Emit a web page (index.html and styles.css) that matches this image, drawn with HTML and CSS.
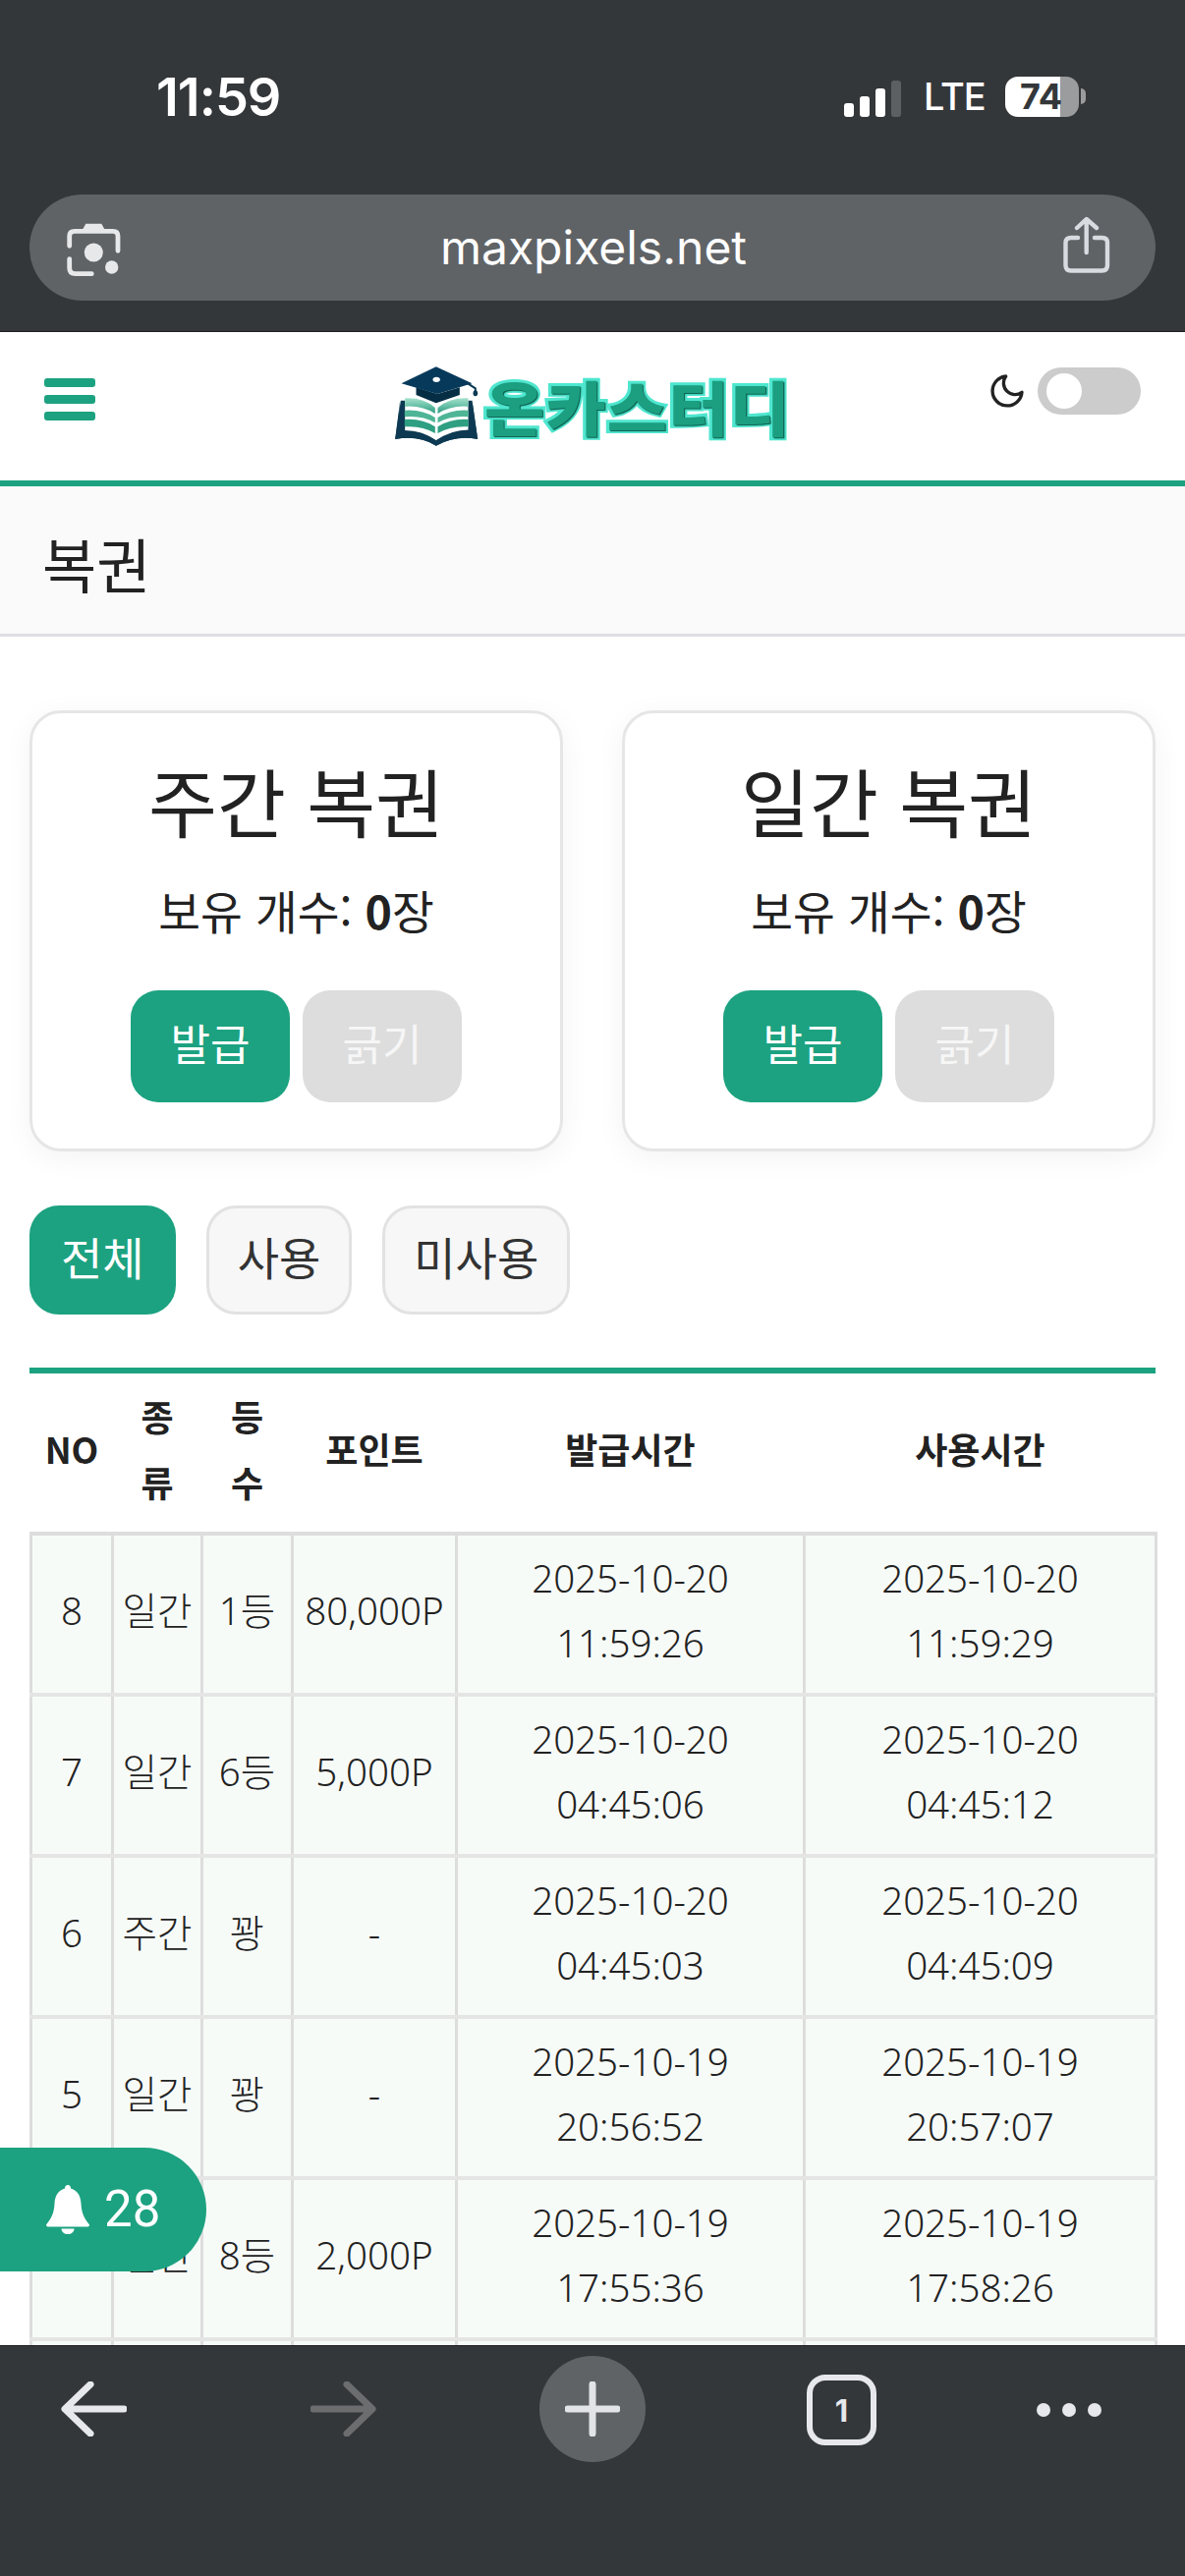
FILE: index.html
```html
<!DOCTYPE html>
<html lang="ko">
<head>
<meta charset="utf-8">
<title>복권</title>
<link rel="stylesheet" href="styles.css">
</head>
<body>
<div class="phone">
  <header class="chrome-top">
    <div class="status">
      <span class="time">11:59</span>
      <div class="status-right">
        <span class="signal"><i class="b1"></i><i class="b2"></i><i class="b3"></i><i class="b4"></i></span>
        <span class="lte">LTE</span>
        <span class="battery"><span class="battery-num">74</span></span>
        <span class="nub"></span>
      </div>
    </div>
    <div class="urlbar">
      <svg class="cam" viewBox="0 0 70 70" fill="none" stroke="#e6e8ea" stroke-width="4.8" stroke-linecap="round">
        <path d="M10.7 33.3V23.3Q10.7 18.3 16 18.3H55Q60 18.3 60 23.3V38.3"/>
        <path d="M10.7 46.7V55.7Q10.7 61.7 16.7 61.7H33.3"/>
        <path d="M23.3 18L27.3 10.7H43.3L47.3 18Z" fill="#e6e8ea" stroke="none"/>
        <circle cx="35.3" cy="40" r="9.5" fill="#e6e8ea" stroke="none"/>
        <circle cx="53.7" cy="55" r="6.7" fill="#e6e8ea" stroke="none"/>
      </svg>
      <span class="url">maxpixels.net</span>
      <svg class="share" viewBox="0 0 60 70" fill="none" stroke="#d8dbe0" stroke-width="4.4" stroke-linecap="round" stroke-linejoin="round">
        <path d="M29.7 7V40M20 15L29.7 6L40 15"/>
        <path d="M21 25H14Q8.5 25 8.5 30V53Q8.5 58.5 14 58.5H45.5Q51 58.5 51 53V30Q51 25 45.5 25H38"/>
      </svg>
    </div>
  </header>

  <div class="viewport">
    <nav class="site-header">
      <div class="burger"><i></i><i></i><i></i></div>
      <div class="logo">
        <svg class="logo-mark" viewBox="130 90 260 255">
          <defs>
            <linearGradient id="pg" x1="0" y1="0" x2="0" y2="1">
              <stop offset="0" stop-color="#a5e2cd"/>
              <stop offset="1" stop-color="#2b9d80"/>
            </linearGradient>
          </defs>
          <path d="M148 200L133 318Q205 305 258 338Q318 305 385 318L368 200L372 290Q310 285 258 322Q205 285 143 292Z" fill="#0d3a52"/>
          <path d="M150 200H163V296Q210 290 258 322Q310 290 356 296V200H368L385 318Q318 305 258 338Q205 305 133 318Z" fill="#0d3a52"/>
          <path d="M163 193Q220 190 255 222V240Q215 214 163 218Z" fill="url(#pg)"/>
          <path d="M162 230Q215 226 255 252V268Q215 245 162 250Z" fill="#4fb597"/>
          <path d="M162 258Q215 254 255 280V300Q215 276 162 280Z" fill="#2f9f82"/>
          <path d="M356 193Q300 190 263 222V240Q303 214 356 218Z" fill="url(#pg)"/>
          <path d="M357 230Q304 226 263 252V268Q304 245 357 250Z" fill="#4fb597"/>
          <path d="M357 258Q304 254 263 280V300Q304 276 357 280Z" fill="#2f9f82"/>
          <path d="M197 160V183L258 208L330 183V160L262 180Z" fill="#052e45"/>
          <path d="M258 97L368 148L262 180L152 148Z" fill="#07395a"/>
          <ellipse cx="259" cy="136" rx="11" ry="8" fill="#fff"/>
          <path d="M355 148L378 163V180" fill="none" stroke="#0b3a52" stroke-width="6"/>
          <ellipse cx="378" cy="178" rx="7" ry="9" fill="#0b3a52"/>
        </svg>
        <span class="logo-text">온카스터디</span>
      </div>
      <div class="theme">
        <svg class="moon" viewBox="0 0 24 24" fill="none" stroke="#222" stroke-width="2" stroke-linecap="round" stroke-linejoin="round"><path d="M21 12.79A9 9 0 1 1 11.21 3 7 7 0 0 0 21 12.79z"/></svg>
        <span class="toggle"><span class="knob"></span></span>
      </div>
    </nav>

    <div class="page-title">복권</div>

    <main class="content">
      <section class="cards">
        <article class="card">
          <h2 class="card-title">주간 복권</h2>
          <p class="card-count">보유 개수: <b>0</b>장</p>
          <div class="card-btns"><span class="btn btn-on">발급</span><span class="btn btn-off">긁기</span></div>
        </article>
        <article class="card">
          <h2 class="card-title">일간 복권</h2>
          <p class="card-count">보유 개수: <b>0</b>장</p>
          <div class="card-btns"><span class="btn btn-on">발급</span><span class="btn btn-off">긁기</span></div>
        </article>
      </section>

      <div class="tabs">
        <span class="tab tab-on">전체</span>
        <span class="tab">사용</span>
        <span class="tab">미사용</span>
      </div>

      <div class="table-wrap">
        <table class="tbl">
          <colgroup><col class="c1"><col class="c2"><col class="c3"><col class="c4"><col class="c5"><col class="c6"></colgroup>
          <thead>
            <tr><th>NO</th><th>종류</th><th>등수</th><th>포인트</th><th>발급시간</th><th>사용시간</th></tr>
          </thead>
          <tbody>
            <tr><td>8</td><td>일간</td><td>1등</td><td>80,000P</td><td>2025-10-20<br>11:59:26</td><td>2025-10-20<br>11:59:29</td></tr>
            <tr><td>7</td><td>일간</td><td>6등</td><td>5,000P</td><td>2025-10-20<br>04:45:06</td><td>2025-10-20<br>04:45:12</td></tr>
            <tr><td>6</td><td>주간</td><td>꽝</td><td>-</td><td>2025-10-20<br>04:45:03</td><td>2025-10-20<br>04:45:09</td></tr>
            <tr><td>5</td><td>일간</td><td>꽝</td><td>-</td><td>2025-10-19<br>20:56:52</td><td>2025-10-19<br>20:57:07</td></tr>
            <tr><td>4</td><td>일간</td><td>8등</td><td>2,000P</td><td>2025-10-19<br>17:55:36</td><td>2025-10-19<br>17:58:26</td></tr>
            <tr class="row-cut"><td></td><td></td><td></td><td></td><td></td><td></td></tr>
          </tbody>
        </table>
      </div>
    </main>

    <div class="notify">
      <svg class="bell" viewBox="0 0 44 50"><path d="M22 0C24 0 25 1.200 25 3.500C32 5.500 35 11 35.500 19C36 28 38 33 44 40.500C44 42 43 42.500 42 42.500H2C1 42.500 0 42 0 40.500C6 33 8 28 8.500 19C9 11 12 5.500 19 3.500C19 1.200 20 0 22 0Z" fill="#fff"/><path d="M15.500 44.500H28.500C28.500 48 25.500 50 22 50C18.500 50 15.500 48 15.500 44.500Z" fill="#fff"/></svg>
      <span class="notify-num">28</span>
    </div>
  </div>

  <footer class="chrome-bottom">
    <svg class="ico-arrow" viewBox="0 0 67 56" fill="none" stroke="#e6e8ec" stroke-width="7" stroke-linecap="round" stroke-linejoin="round"><path d="M30 3L4 28L30 53M5 28H64"/></svg>
    <svg class="ico-arrow ico-fwd" viewBox="0 0 67 56" fill="none" stroke="#6b6d6f" stroke-width="7" stroke-linecap="round" stroke-linejoin="round"><path d="M37 3L63 28L37 53M62 28H3"/></svg>
    <span class="plus"><svg viewBox="0 0 56 56" fill="none" stroke="#e2e4e8" stroke-width="7" stroke-linecap="round"><path d="M28 3V53M3 28H53"/></svg></span>
    <span class="tabcount">1</span>
    <span class="dots"><i></i><i></i><i></i></span>
  </footer>
</div>
</body>
</html>
```
FILE: styles.css
```css
* { box-sizing: border-box; }
html, body { margin: 0; padding: 0; }
body { background: #fff; font-family: "Noto Sans CJK KR", "Noto Sans", sans-serif; color: #222; }
.phone { width: 1206px; height: 2622px; display: flex; flex-direction: column; overflow: hidden; }

/* browser chrome top */
.chrome-top { height: 338px; flex: none; background: #34373a; border-bottom: 1px solid #1e2022; }
.status { height: 198px; padding: 71px 101px 0 159px; display: flex; justify-content: space-between; align-items: flex-start; }
.time { font-family: Inter, sans-serif; font-weight: 600; font-size: 54px; line-height: 56px; color: #fff; letter-spacing: -1px; }
.status-right { display: flex; align-items: center; height: 56px; margin-top: -1px; }
.signal { display: flex; align-items: flex-end; gap: 6px; height: 37px; margin-top: 4px; }
.signal i { width: 10px; border-radius: 3px; background: #fff; display: block; }
.signal .b1 { height: 14px; }
.signal .b2 { height: 21px; }
.signal .b3 { height: 29px; }
.signal .b4 { height: 37px; background: #5d6063; }
.lte { font-family: Inter, sans-serif; font-weight: 500; font-size: 38px; line-height: 40px; color: #fff; margin-left: 23px; width: 62px; letter-spacing: -1px; }
.battery { margin-left: 21px; width: 75px; height: 41px; border-radius: 13px; background: linear-gradient(90deg, #fff 0, #fff 56px, #9b9c9e 56px); display: flex; align-items: center; justify-content: center; }
.battery-num { font-family: Inter, sans-serif; font-weight: 700; font-size: 36px; line-height: 41px; color: #34373a; margin-left: -2px; }
.nub { width: 5px; height: 16px; background: #9b9c9e; margin-left: 2px; border-radius: 0 6px 6px 0; }
.urlbar { margin: 0 30px; height: 108px; border-radius: 54px; background: #5f6366; display: flex; align-items: center; justify-content: space-between; padding: 0 40px 0 30px; }
.cam { width: 70px; height: 70px; }
.share { width: 60px; height: 70px; }
.url { font-family: Inter, sans-serif; font-size: 48px; color: #fff; margin: -2px 0 0 2px; }

/* page */
.viewport { flex: 1; min-height: 0; position: relative; overflow: hidden; background: #fff; }
.site-header { height: 157px; border-bottom: 6px solid #1ca280; display: grid; grid-template-columns: 1fr auto 1fr; padding: 0 45px; }
.burger { display: flex; flex-direction: column; gap: 8.500px; margin-top: 47px; }
.burger i { display: block; width: 52px; height: 8.500px; background: #1ca280; border-radius: 3px; }
.logo { display: flex; align-items: flex-start; margin-top: 33px; gap: 5px; }
.logo-mark { width: 87px; height: 85px; }
.logo-text { font-weight: 900; font-size: 60px; line-height: 72px; margin-top: 6px; width: 312px; white-space: nowrap; color: #1b9f80; -webkit-text-stroke: 6px #4fe6cf; paint-order: stroke fill; letter-spacing: 1px; text-shadow: 1px 1px 1px #0a5a48; transform: scaleX(1.11); transform-origin: left center; }
.theme { display: flex; justify-content: flex-end; align-items: center; gap: 11px; margin-top: 36px; height: 48px; }
.moon { width: 40px; height: 40px; }
.toggle { width: 105px; height: 48px; border-radius: 24px; background: #ccc; padding: 6px 9px; display: block; }
.knob { display: block; width: 36px; height: 36px; border-radius: 50%; background: #fff; }
.page-title { height: 153px; background: #fafafa; border-bottom: 3px solid #dfdfe3; padding: 42px 43px 0; font-size: 60px; line-height: 72px; color: #222; }
.content { padding: 75px 30px 0; }
.cards { display: grid; grid-template-columns: 1fr 1fr; gap: 60px; }
.card { height: 449px; background: #fff; border: 3px solid #e6e6e6; border-radius: 32px; box-shadow: 0 6px 30px rgba(0,0,0,.05); padding-top: 38px; text-align: center; }
.card-title { margin: 0; font-weight: 400; font-size: 76px; line-height: 100px; color: #222; }
.card-count { margin: 29px 0 0; font-size: 46.500px; line-height: 66px; color: #222; }
.card-count b { font-weight: 700; }
.card-btns { margin-top: 49px; display: flex; justify-content: center; gap: 13px; }
.btn { width: 162px; height: 114px; border-radius: 28px; display: flex; align-items: center; justify-content: center; font-size: 44px; color: #fff; padding-bottom: 9px; }
.btn-on { background: #1ca280; }
.btn-off { background: #ddd; color: #f6f6f6; }
.tabs { margin-top: 55px; display: flex; gap: 31px; }
.tab { height: 111px; padding: 0 29px 9px; border: 3px solid #e2e2e2; border-radius: 30px; background: #f7f7f7; display: flex; align-items: center; font-size: 46px; color: #333; }
.tab-on { background: #1ca280; border-color: #1ca280; color: #fff; }
.table-wrap { margin-top: 54px; border-top: 6px solid #1ca280; }
.tbl { width: 1145px; table-layout: fixed; border-collapse: collapse; }
.c1 { width: 83px; } .c2 { width: 91px; } .c3 { width: 92px; } .c4 { width: 167px; } .c5 { width: 354px; } .c6 { width: 358px; }
.tbl th { padding: 10px 16px 18px; font-size: 36px; line-height: 66.500px; font-weight: 700; color: #222; text-align: center; }
.tbl th:first-child { padding: 10px 0 18px; }
.tbl td { padding: 9.500px 2px 17.500px; font-family: "Noto Sans", "Noto Sans CJK KR", sans-serif; font-weight: 300; font-size: 38.500px; line-height: 66.500px; text-align: center; color: #222; background: #f7fbf8; border: 3px solid #ddd; border-bottom: 4px solid #e5e5e5; }
.tbl tbody tr:first-child td { border-top: 4px solid #ddd; }
.row-cut td { height: 164px; }

.notify { position: absolute; left: 0; bottom: 75px; width: 210px; height: 126px; background: #1ca280; border-radius: 0 63px 63px 0; display: flex; align-items: center; padding-left: 47px; gap: 15px; }
.bell { width: 44px; height: 50px; }
.notify-num { font-family: Roboto, sans-serif; font-weight: 400; font-size: 51px; line-height: 50px; color: #fff; }

/* browser chrome bottom */
.chrome-bottom { height: 235px; flex: none; background: #34373a; border-top: 1px solid #1e2022; padding: 10px 0 0 62px; display: flex; align-items: flex-start; }
.ico-arrow { width: 67px; height: 56px; margin-top: 26px; }
.ico-fwd { margin-left: 187px; }
.plus { margin-left: 166px; width: 108px; height: 108px; border-radius: 50%; background: #5f6366; display: flex; align-items: center; justify-content: center; }
.plus svg { width: 56px; height: 56px; }
.tabcount { margin-left: 164px; margin-top: 19px; width: 71px; height: 72px; border: 6px solid #e6e8ec; border-radius: 19px; display: flex; align-items: center; justify-content: center; font-family: Inter, sans-serif; font-weight: 700; font-size: 31px; color: #e6e8ec; }
.dots { margin-left: 163px; margin-top: 48px; display: flex; gap: 12px; }
.dots i { display: block; width: 14px; height: 14px; border-radius: 50%; background: #e6e8ec; }
```
